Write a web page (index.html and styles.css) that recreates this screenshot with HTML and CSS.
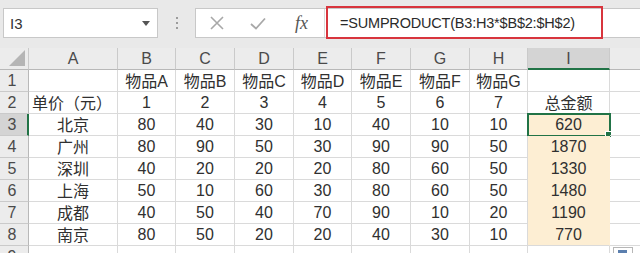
FILE: index.html
```html
<html>

<head>
    <link rel="stylesheet" href="styles.css">
</head>

<body>
    <div class="toolbar">
        <div class="namebox">
            <span>I3</span>
            <svg class="caret" width="8" height="5" viewBox="0 0 8 5"><polygon points="0,0 8,0 4,5" fill="#555"/></svg>
        </div>
        <div class="grip"><i></i><i></i><i></i></div>
        <div class="fbar">
            <div class="ficons">
                <svg class="ico-x" width="14" height="14" viewBox="0 0 14 14"><path d="M1 1 L13 13 M13 1 L1 13" stroke="#a8a8a8" stroke-width="1.6" fill="none"/></svg>
                <svg class="ico-ok" width="16" height="13" viewBox="0 0 16 13"><path d="M1 7 L6 11.5 L15 1.5" stroke="#a8a8a8" stroke-width="1.8" fill="none"/></svg>
                <span class="fx">fx</span>
            </div>
            <div class="formula">=SUMPRODUCT(B3:H3*$B$2:$H$2)</div>
        </div>
    </div>

    <div class="sheet">
        <div class="hd corner"><svg width="16" height="16" viewBox="0 0 16 16"><polygon points="16,0 16,16 0,16" fill="#b5b5b5"/></svg></div>
        <div class="hd">A</div><div class="hd">B</div><div class="hd">C</div><div class="hd">D</div>
        <div class="hd">E</div><div class="hd">F</div><div class="hd">G</div><div class="hd">H</div>
        <div class="hd sel-col">I</div><div class="hd"></div>

        <div class="rh">1</div>
        <div class="c"></div><div class="c txt">物品A</div><div class="c txt">物品B</div><div class="c txt">物品C</div><div class="c txt">物品D</div><div class="c txt">物品E</div><div class="c txt">物品F</div><div class="c txt">物品G</div><div class="c"></div><div class="c"></div>

        <div class="rh">2</div>
        <div class="c txt left">单价（元）</div><div class="c">1</div><div class="c">2</div><div class="c">3</div><div class="c">4</div><div class="c">5</div><div class="c">6</div><div class="c">7</div><div class="c txt">总金额</div><div class="c"></div>

        <div class="rh sel-row">3</div>
        <div class="c txt">北京</div><div class="c">80</div><div class="c">40</div><div class="c">30</div><div class="c">10</div><div class="c">40</div><div class="c">10</div><div class="c">10</div><div class="c sum active">620</div><div class="c"></div>

        <div class="rh">4</div>
        <div class="c txt">广州</div><div class="c">80</div><div class="c">90</div><div class="c">50</div><div class="c">30</div><div class="c">90</div><div class="c">90</div><div class="c">50</div><div class="c sum">1870</div><div class="c"></div>

        <div class="rh">5</div>
        <div class="c txt">深圳</div><div class="c">40</div><div class="c">20</div><div class="c">20</div><div class="c">20</div><div class="c">80</div><div class="c">60</div><div class="c">50</div><div class="c sum">1330</div><div class="c"></div>

        <div class="rh">6</div>
        <div class="c txt">上海</div><div class="c">50</div><div class="c">10</div><div class="c">60</div><div class="c">30</div><div class="c">80</div><div class="c">60</div><div class="c">50</div><div class="c sum">1480</div><div class="c"></div>

        <div class="rh">7</div>
        <div class="c txt">成都</div><div class="c">40</div><div class="c">50</div><div class="c">40</div><div class="c">70</div><div class="c">90</div><div class="c">10</div><div class="c">20</div><div class="c sum">1190</div><div class="c"></div>

        <div class="rh">8</div>
        <div class="c txt">南京</div><div class="c">80</div><div class="c">50</div><div class="c">20</div><div class="c">20</div><div class="c">40</div><div class="c">30</div><div class="c">10</div><div class="c sum last">770</div><div class="c"></div>

        <div class="rh">9</div>
        <div class="c"></div><div class="c"></div><div class="c"></div><div class="c"></div><div class="c"></div><div class="c"></div><div class="c"></div><div class="c"></div><div class="c"></div><div class="c"></div>
    </div>

    <div class="paste"><i></i></div>
</body>

</html>
```

FILE: styles.css
```css
body {
    margin: 0;
    overflow: hidden;
    background-color: #fff;
    font-family: "Liberation Sans", "Noto Sans CJK SC", sans-serif;
    color: #222;
}

/* formula bar */
.toolbar {
    height: 48px;
    box-sizing: border-box;
    padding-top: 8px;
    background-color: #e9e9e9;
    display: flex;
    align-items: flex-start;
}

.namebox {
    margin-left: 3px;
    width: 155px;
    height: 30px;
    box-sizing: border-box;
    background: #fff;
    border: 1px solid #c8c8c8;
    display: flex;
    align-items: center;
    justify-content: space-between;
    padding: 0 7px 0 6px;
    font-size: 15px;
    color: #333;
}

.grip {
    width: 37px;
    height: 30px;
    display: flex;
    flex-direction: column;
    align-items: center;
    justify-content: center;
    gap: 3px;
}

.grip i {
    width: 2px;
    height: 2px;
    background: #9c9c9c;
}

.fbar {
    flex: 1;
    height: 30px;
    box-sizing: border-box;
    background: #fff;
    border: 1px solid #c8c8c8;
    border-right: none;
    display: flex;
    align-items: center;
}

.ficons {
    width: 128px;
    height: 100%;
    border-right: 1px solid #dcdcdc;
    display: flex;
    align-items: center;
}

.ico-x {
    margin-left: 14px;
}

.ico-ok {
    margin-left: 26px;
}

.fx {
    margin-left: 29px;
    font-family: "Liberation Serif", serif;
    font-style: italic;
    font-size: 18px;
    color: #555;
}

.formula {
    align-self: flex-start;
    margin-top: -3px;
    margin-left: 1px;
    width: 277px;
    height: 33px;
    box-sizing: border-box;
    border: 2px solid #d8353d;
    padding-left: 12px;
    display: flex;
    align-items: center;
    font-size: 14.5px;
    letter-spacing: -0.2px;
    color: #2a2a2a;
    white-space: nowrap;
}

/* grid */
.sheet {
    display: grid;
    grid-template-columns: 29px 89px 58px 59px 59px 58px 59px 59px 58px 82px 90px;
    grid-template-rows: repeat(10, 22px);
}

.hd,
.rh {
    background: #ececec;
    color: #4a4a4a;
    font-size: 16px;
    display: flex;
    align-items: center;
    justify-content: center;
    box-sizing: border-box;
}

.hd {
    border-right: 1px solid #cacaca;
    border-bottom: 1px solid #b8b8b8;
    padding-top: 1px;
}

.rh {
    border-right: 1px solid #b8b8b8;
    border-bottom: 1px solid #cacaca;
    padding-right: 4px;
    align-items: flex-end;
    line-height: 16px;
    padding-bottom: 2px;
}

.corner {
    justify-content: flex-end;
    align-items: flex-end;
    padding: 0 3px 3px 0;
}

.sel-col {
    background: #d4d4d4;
    border-bottom: 2px solid #217346;
}

.sel-row {
    background: #d4d4d4;
    border-right: 2px solid #217346;
    padding-right: 3px;
}

.c {
    position: relative;
    box-sizing: border-box;
    border-right: 1px solid #dadada;
    border-bottom: 1px solid #dadada;
    display: flex;
    align-items: flex-end;
    justify-content: center;
    font-size: 16px;
    line-height: 16px;
    padding-bottom: 2px;
    white-space: nowrap;
    color: #303030;
}

.txt {
    padding-bottom: 1px;
}

.left {
    justify-content: flex-start;
    padding-left: 3px;
}

.sum {
    background: #fdeed3;
    border-color: #fdeed3;
}

.sum.last {
    border-bottom-color: #dadada;
}

.active {
    outline: 2px solid #217346;
    outline-offset: -1px;
}

.active::after {
    content: "";
    position: absolute;
    right: -3px;
    bottom: -3px;
    width: 5px;
    height: 5px;
    background: #217346;
    border: 1px solid #fff;
}

.paste {
    position: absolute;
    left: 613px;
    top: 247px;
    width: 18px;
    height: 14px;
    background: #fff;
    border: 1px solid #b7b7b7;
}

.paste i {
    position: absolute;
    left: 4px;
    top: 2px;
    width: 9px;
    height: 4px;
    background: #5b7fae;
}
```
